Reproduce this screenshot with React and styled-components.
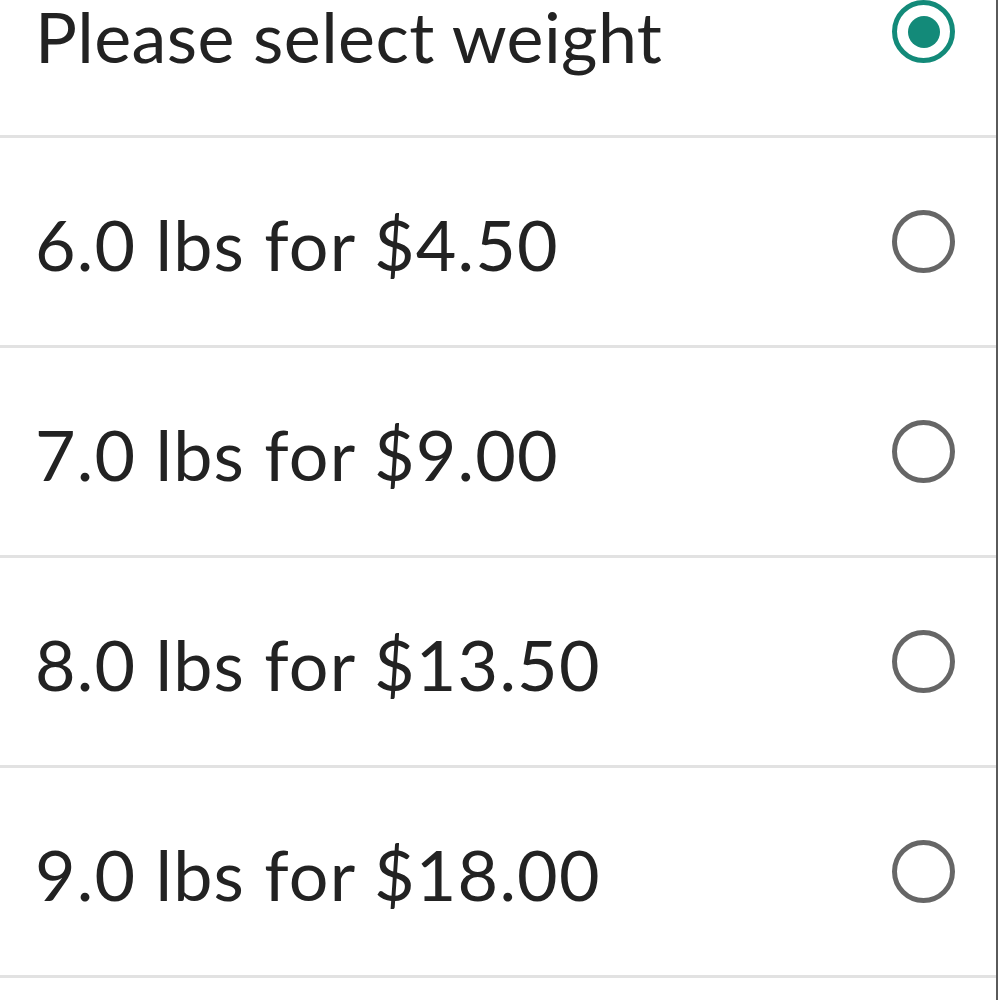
import React, { useState } from 'react'
import styled, { createGlobalStyle } from 'styled-components'

const GlobalStyle = createGlobalStyle`
html, body {
  margin: 0;
  padding: 0;
  background: #ffffff;
}
body {
  font-family: Lato, "Open Sans", sans-serif;
  color: #222222;
  overflow: hidden;
}
`

const Page = styled.div`
box-sizing: border-box;
width: 998px;
height: 1000px;
overflow: hidden;
border-right: 2px solid #5a5a5a;
background: #ffffff;
`

const List = styled.ul`
list-style: none;
margin: -72px 0 0 0;
padding: 0;
`

const Row = styled.li`
display: flex;
align-items: center;
justify-content: space-between;
height: 207px;
padding: 0 41px 0 35px;
border-bottom: 3px solid #e2e2e2;
cursor: pointer;
`

const Label = styled.span`
font-size: 70px;
font-weight: 400;
line-height: 70px;
color: #222222;
padding-top: ${p => (p.$title ? '9px' : '5px')};
letter-spacing: ${p => (p.$title ? '0.4px' : '1.2px')};
white-space: nowrap;
`

const Radio = styled.span`
box-sizing: border-box;
display: flex;
align-items: center;
justify-content: center;
width: 63px;
height: 63px;
border-radius: 50%;
border: 5px solid ${p => (p.$checked ? '#138a79' : '#666666')};
flex-shrink: 0;
`

const Dot = styled.span`
width: 32px;
height: 32px;
border-radius: 50%;
background: #138a79;
`

export default function App() {
    const [selected, setSelected] = useState(0)

    let options = [
        "Please select weight",
        "6.0 lbs for $4.50",
        "7.0 lbs for $9.00",
        "8.0 lbs for $13.50",
        "9.0 lbs for $18.00",
    ]

    return (
        <>
            <GlobalStyle />
            <Page>
                <List>
                    {
                        options.map((o, i) => {
                            return (
                                <Row key={o} onClick={() => setSelected(i)}>
                                    <Label $title={i === 0}>{o}</Label>
                                    <Radio $checked={selected === i}>
                                        {selected === i && <Dot />}
                                    </Radio>
                                </Row>
                            )
                        })
                    }
                </List>
            </Page>
        </>
    )
}
